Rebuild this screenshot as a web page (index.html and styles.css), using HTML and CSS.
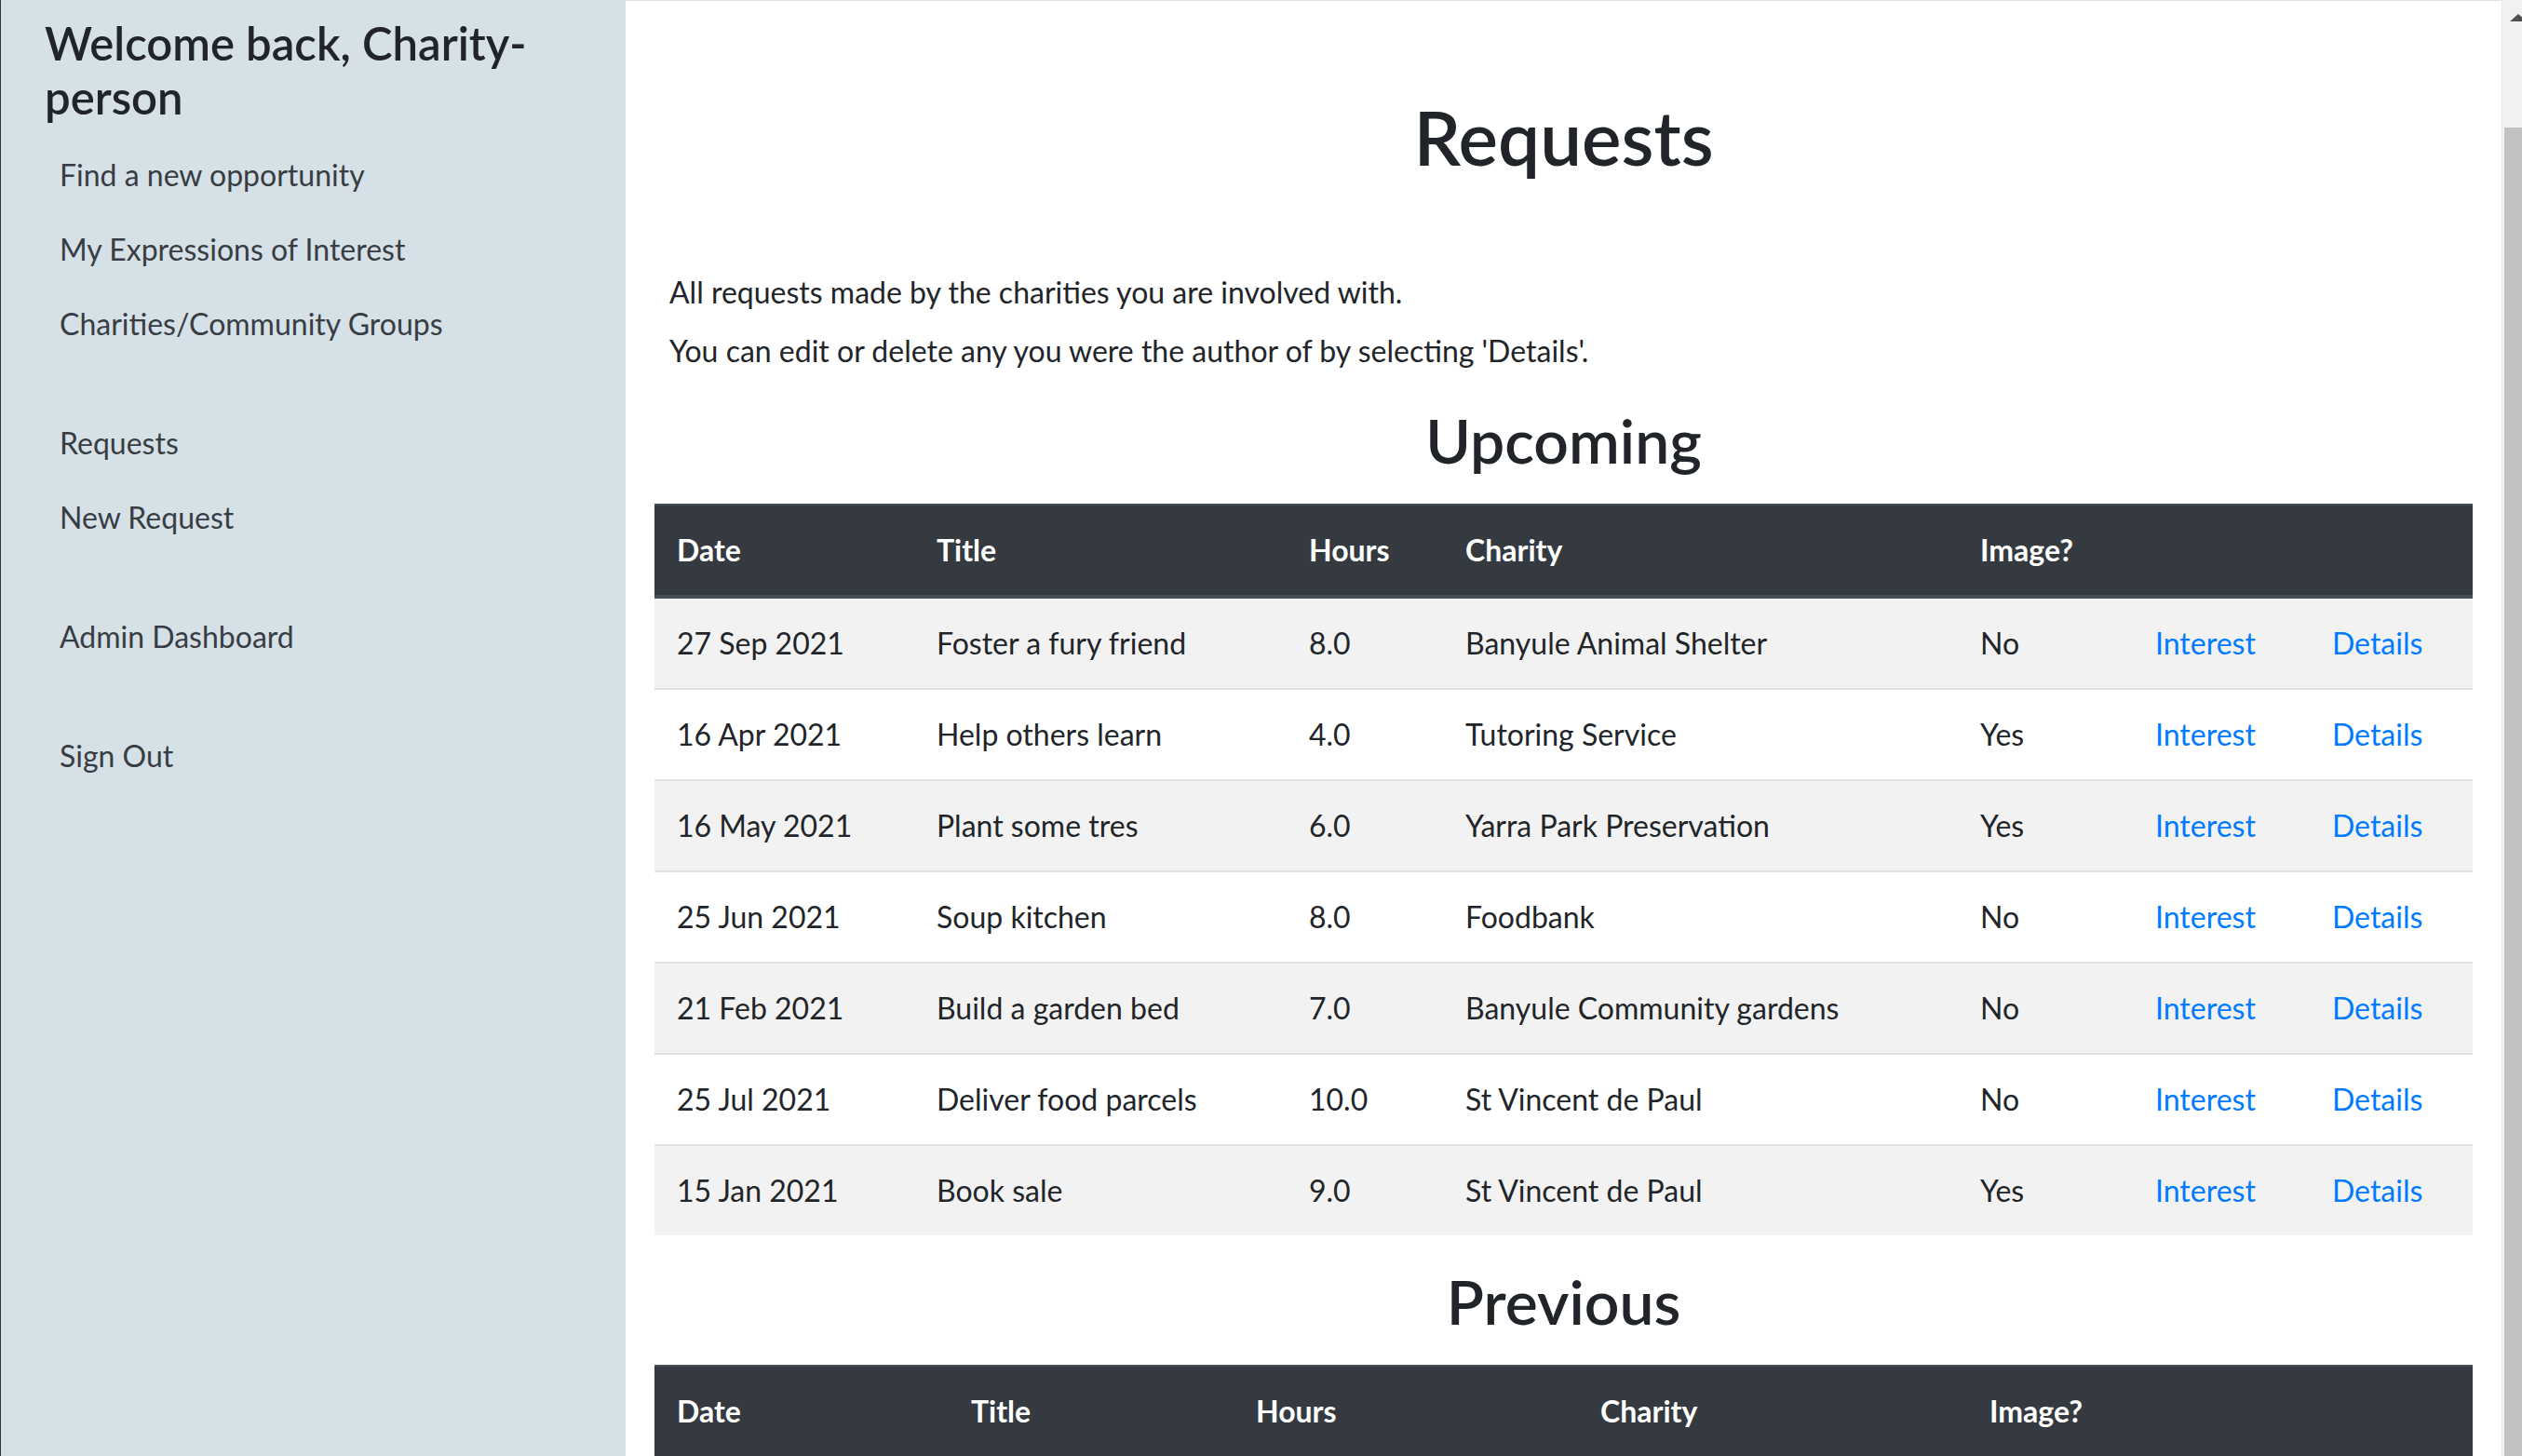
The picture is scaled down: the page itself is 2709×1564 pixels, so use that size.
FILE: index.html
```html
<!DOCTYPE html>
<html lang="en">
<head>
<meta charset="utf-8">
<title>Requests</title>
<link rel="stylesheet" href="styles.css">
</head>
<body>
<div class="app">
  <aside class="sidebar">
    <h4 class="welcome">Welcome back, Charity-person</h4>
    <nav class="nav-group">
      <a class="nav-link" href="#">Find a new opportunity</a>
      <a class="nav-link" href="#">My Expressions of Interest</a>
      <a class="nav-link" href="#">Charities/Community Groups</a>
    </nav>
    <nav class="nav-group spaced">
      <a class="nav-link" href="#">Requests</a>
      <a class="nav-link" href="#">New Request</a>
    </nav>
    <nav class="nav-group spaced">
      <a class="nav-link" href="#">Admin Dashboard</a>
    </nav>
    <nav class="nav-group spaced">
      <a class="nav-link" href="#">Sign Out</a>
    </nav>
  </aside>

  <main class="main">
    <h1 class="page-title">Requests</h1>
    <div class="intro">
      <p>All requests made by the charities you are involved with.</p>
      <p>You can edit or delete any you were the author of by selecting 'Details'.</p>
    </div>

    <h2 class="section-title">Upcoming</h2>
    <table class="table">
      <colgroup>
        <col class="u-date"><col class="u-title"><col class="u-hours"><col class="u-charity"><col class="u-image"><col class="u-interest"><col class="u-details">
      </colgroup>
      <thead>
        <tr><th>Date</th><th>Title</th><th>Hours</th><th>Charity</th><th>Image?</th><th></th><th></th></tr>
      </thead>
      <tbody>
        <tr><td>27 Sep 2021</td><td>Foster a fury friend</td><td>8.0</td><td>Banyule Animal Shelter</td><td>No</td><td><a href="#">Interest</a></td><td><a href="#">Details</a></td></tr>
        <tr><td>16 Apr 2021</td><td>Help others learn</td><td>4.0</td><td>Tutoring Service</td><td>Yes</td><td><a href="#">Interest</a></td><td><a href="#">Details</a></td></tr>
        <tr><td>16 May 2021</td><td>Plant some tres</td><td>6.0</td><td>Yarra Park Preservation</td><td>Yes</td><td><a href="#">Interest</a></td><td><a href="#">Details</a></td></tr>
        <tr><td>25 Jun 2021</td><td>Soup kitchen</td><td>8.0</td><td>Foodbank</td><td>No</td><td><a href="#">Interest</a></td><td><a href="#">Details</a></td></tr>
        <tr><td>21 Feb 2021</td><td>Build a garden bed</td><td>7.0</td><td>Banyule Community gardens</td><td>No</td><td><a href="#">Interest</a></td><td><a href="#">Details</a></td></tr>
        <tr><td>25 Jul 2021</td><td>Deliver food parcels</td><td>10.0</td><td>St Vincent de Paul</td><td>No</td><td><a href="#">Interest</a></td><td><a href="#">Details</a></td></tr>
        <tr><td>15 Jan 2021</td><td>Book sale</td><td>9.0</td><td>St Vincent de Paul</td><td>Yes</td><td><a href="#">Interest</a></td><td><a href="#">Details</a></td></tr>
      </tbody>
    </table>

    <h2 class="section-title">Previous</h2>
    <table class="table">
      <colgroup>
        <col class="p-date"><col class="p-title"><col class="p-hours"><col class="p-charity"><col class="p-image"><col class="p-a"><col class="p-b">
      </colgroup>
      <thead>
        <tr><th>Date</th><th>Title</th><th>Hours</th><th>Charity</th><th>Image?</th><th></th><th></th></tr>
      </thead>
    </table>
  </main>

  <div class="scrollbar">
    <div class="scroll-arrow"></div>
    <div class="scroll-thumb"></div>
  </div>
</div>
</body>
</html>
```

FILE: styles.css
```css
* { box-sizing: border-box; }

html, body {
  margin: 0;
  padding: 0;
  height: 100%;
  overflow: hidden;
}

body {
  font-family: Lato, "Open Sans", "Noto Sans", sans-serif;
  font-size: 32px;
  line-height: 1.5;
  color: #212529;
  background: #ffffff;
}

.app {
  display: flex;
  height: 1564px;
  overflow: hidden;
}

/* ---------- sidebar ---------- */
.sidebar {
  width: 672px;
  flex: 0 0 672px;
  background: #d5e1e7;
  border-left: 1px solid #2c3540;
  padding: 18px 0 0 47px;
}

.welcome {
  margin: 0 0 15px 0;
  font-size: 49px;
  line-height: 57.6px;
  font-weight: 600;
  color: #212529;
  width: 560px;
}

.nav-group {
  display: flex;
  flex-direction: column;
}

.nav-group.spaced {
  margin-top: 48px;
}

.nav-link {
  display: block;
  padding: 16px 16px;
  line-height: 48px;
  font-size: 32px;
  color: #383d43;
  text-decoration: none;
}

/* ---------- main ---------- */
.main {
  flex: 1 1 auto;
  min-width: 0;
  border-top: 1px solid #dfe1e5;
  padding: 98px 31px 0 31px;
  overflow: hidden;
}

.page-title {
  margin: 0;
  text-align: center;
  font-size: 80px;
  line-height: 96px;
  font-weight: 600;
}

.intro {
  padding: 95px 16px 0 16px;
}

.intro p {
  margin: 0 0 15px 0;
}

.intro p:last-child {
  margin-bottom: 0;
}

.section-title {
  margin: 32px 0 29px 0;
  text-align: center;
  font-size: 66px;
  line-height: 79px;
  font-weight: 600;
}

.table + .section-title {
  margin-top: 0;
}

/* ---------- tables ---------- */
.table {
  width: 100%;
  border-collapse: collapse;
  table-layout: fixed;
  margin-bottom: 31px;
}

.table th,
.table td {
  padding: 24px 24px;
  text-align: left;
  vertical-align: top;
  white-space: nowrap;
  line-height: 48px;
}

.table thead th {
  background: #343a40;
  color: #ffffff;
  font-weight: 700;
  border-top: 2px solid #454d55;
  border-bottom: 4px solid #454d55;
}

.table tbody td {
  border-top: 2px solid #dee2e6;
}

.table tbody tr:nth-child(odd) {
  background: #f2f2f2;
}

.table tbody tr:first-child td {
  border-top: 0;
}

.table a {
  color: #007bff;
  text-decoration: none;
}

.u-date { width: 279px; }
.u-title { width: 400px; }
.u-hours { width: 168px; }
.u-charity { width: 553px; }
.u-image { width: 188px; }
.u-interest { width: 190px; }
.u-details { width: 175px; }

.p-date { width: 316px; }
.p-title { width: 306px; }
.p-hours { width: 370px; }
.p-charity { width: 418px; }
.p-image { width: 200px; }
.p-a { width: 171px; }
.p-b { width: 172px; }

/* ---------- fake scrollbar ---------- */
.scrollbar {
  flex: 0 0 22px;
  width: 22px;
  background: #f1f1f1;
  border-left: 1px solid #e9e9e9;
  position: relative;
  overflow: hidden;
}

.scroll-arrow {
  position: absolute;
  top: 15px;
  left: 8px;
  width: 0;
  height: 0;
  border-left: 9px solid transparent;
  border-right: 9px solid transparent;
  border-bottom: 8px solid #505050;
}

.scroll-thumb {
  position: absolute;
  top: 137px;
  left: 2px;
  right: 0;
  bottom: 0;
  background: #c1c1c1;
}
```
